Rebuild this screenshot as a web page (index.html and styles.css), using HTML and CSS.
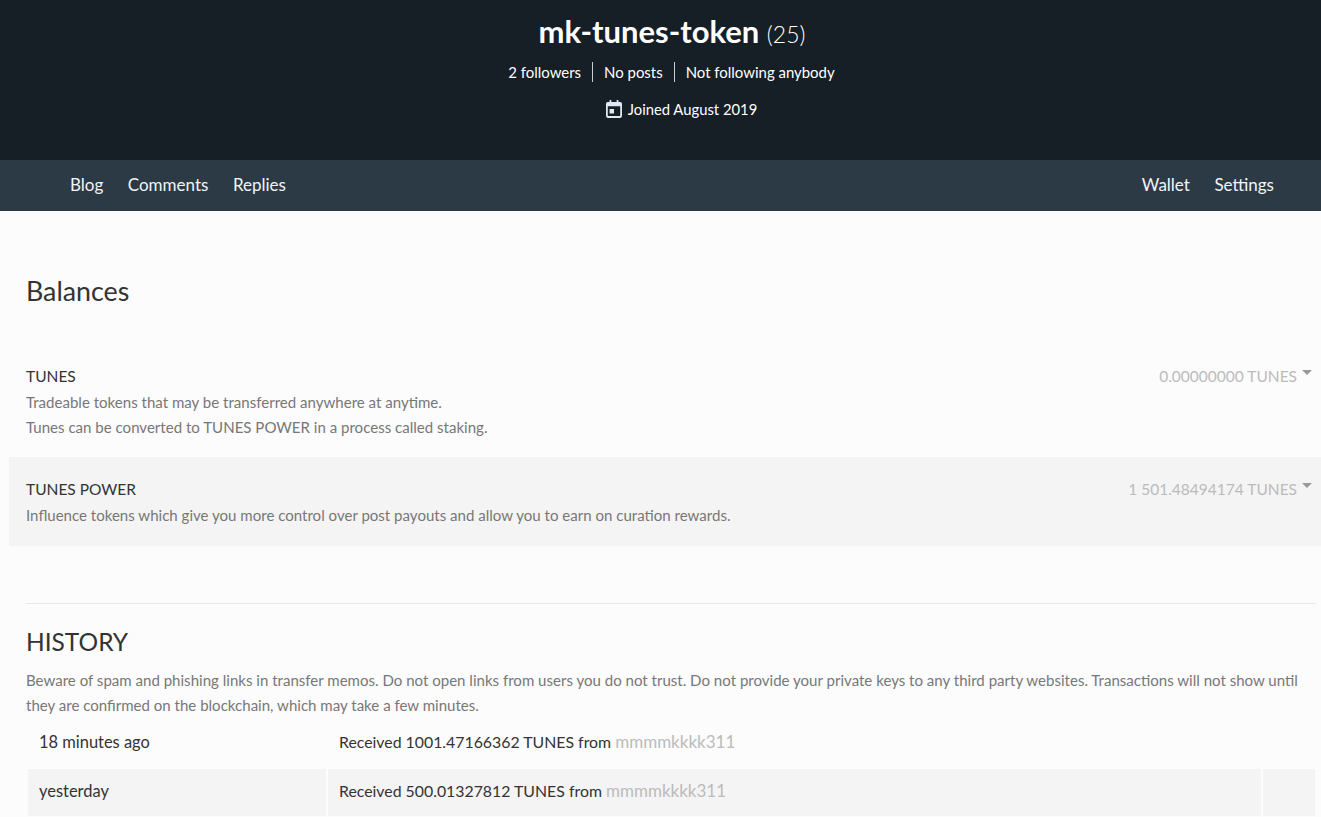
FILE: index.html
```html
<!DOCTYPE html>
<html lang="en">
<head>
<meta charset="utf-8">
<title>mk-tunes-token</title>
<link rel="stylesheet" href="styles.css">
</head>
<body>
<header class="hero">
  <h1 class="hero-title">mk-tunes-token <span class="rep">(25)</span></h1>
  <div class="stats">
    <span class="stat">2 followers</span>
    <span class="stat">No posts</span>
    <span class="stat">Not following anybody</span>
  </div>
  <div class="joined">
    <svg class="cal" viewBox="0 0 18 20" width="18" height="20" aria-hidden="true"><path fill="#dfe9f5" d="M4 0h2v2h6V0h2v2h2a2 2 0 0 1 2 2v14a2 2 0 0 1-2 2H2a2 2 0 0 1-2-2V4a2 2 0 0 1 2-2h2V0zM2 7v11h14V7H2zm2 3h5v5H4v-5z"/></svg>
    <span>Joined August 2019</span>
  </div>
</header>
<nav class="tabs">
  <div class="tab-group">
    <a class="tab">Blog</a><a class="tab">Comments</a><a class="tab">Replies</a>
  </div>
  <div class="tab-group">
    <a class="tab">Wallet</a><a class="tab">Settings</a>
  </div>
</nav>
<main class="content">
  <h2 class="balances-title">Balances</h2>
  <section class="balance first">
    <div>
      <div class="balance-name">TUNES</div>
      <div class="muted">Tradeable tokens that may be transferred anywhere at anytime.<br>Tunes can be converted to TUNES POWER in a process called staking.</div>
    </div>
    <div class="amount">0.00000000 TUNES<i class="caret"></i></div>
  </section>
  <section class="balance shaded">
    <div>
      <div class="balance-name">TUNES POWER</div>
      <div class="muted">Influence tokens which give you more control over post payouts and allow you to earn on curation rewards.</div>
    </div>
    <div class="amount">1 501.48494174 TUNES<i class="caret"></i></div>
  </section>
  <hr class="rule">
  <h2 class="history-title">HISTORY</h2>
  <p class="notice">Beware of spam and phishing links in transfer memos. Do not open links from users you do not trust. Do not provide your private keys to any third party websites. Transactions will not show until they are confirmed on the blockchain, which may take a few minutes.</p>
  <table class="history">
    <tr class="row-first"><td class="c-time">18 minutes ago</td><td>Received 1001.47166362 TUNES from <span class="user">mmmmkkkk311</span></td><td class="c-end"></td></tr>
    <tr class="alt"><td class="c-time">yesterday</td><td>Received 500.01327812 TUNES from <span class="user">mmmmkkkk311</span></td><td class="c-end"></td></tr>
  </table>
</main>
</body>
</html>
```
FILE: styles.css
```css
* { box-sizing: border-box; }
html, body { margin: 0; height: 817px; overflow: hidden; }
body { background: #fcfcfc; color: #333; font-family: "Lato", "Noto Sans", sans-serif; font-size: 15.05px; }
.hero { height: 160px; background: #161e26; color: #fff; display: flex; flex-direction: column; align-items: center; padding: 10px 0 0 22px; }
.hero-title { margin: 0 0 0 1px; font-size: 31px; font-weight: 700; line-height: 42px; }
.rep { font-size: 23px; font-weight: 300; margin-left: 0; }
.stats { display: flex; margin-top: 7px; line-height: 20px; font-size: 14.95px; }
.stat { padding: 0 11px; border-left: 1px solid #c8cdd2; }
.stat:first-child { border-left: 0; }
.joined { display: flex; align-items: center; gap: 6px; margin: 17px 0 0 20px; line-height: 20px; font-size: 14.8px; }
.cal { width: 16px; height: 18px; }
.tabs { height: 51px; background: #2c3a46; display: flex; justify-content: space-between; align-items: center; padding: 0 47px 2px 70px; color: #f2f4f6; font-size: 17px; }
.tab-group { display: flex; gap: 24.5px; }
.content { padding: 0 5px 0 9px; }
.balances-title { margin: 0; padding: 62px 0 0 17px; font-size: 26.8px; font-weight: 400; line-height: 36px; color: #333; }
.balance { display: flex; justify-content: space-between; padding: 20px 9px 18px 17px; }
.balance.first { margin-top: 55px; padding: 0 4px 17px 17px; }
.balance-name { font-size: 15.5px; line-height: 24px; color: #333; }
.muted { color: #777; line-height: 25px; margin-top: 2px; }
.amount { color: #bbb; font-size: 15.5px; line-height: 24px; display: flex; }
.caret { width: 0; height: 0; margin: 6px 0 0 5px; border: 5px solid transparent; border-top-color: #999; border-bottom: 0; }
.shaded { background: #f4f4f4; margin-right: -5px; }
.rule { height: 1px; border: 0; background: #e8e8e8; margin: 57px 0 0 17px; }
.history-title { margin: 0; padding: 20px 0 0 17px; font-size: 24.5px; font-weight: 400; line-height: 36px; }
.notice { margin: 8px 10px 1px 17px; line-height: 25px; color: #777; }
.history { border-collapse: separate; border-spacing: 2px 0; margin-left: 17px; width: 1291px; font-size: 15.85px; color: #333; }
.history td { padding: 10px 11px 0; vertical-align: top; line-height: 24px; height: 47px; }
.history .row-first td { height: 50px; padding-top: 11px; }
.history .c-time { width: 298px; font-size: 16.45px; }
.c-end { width: 52px; }
.alt td { background: #f4f4f4; }
.user { color: #bbb; font-size: 17px; }
```
